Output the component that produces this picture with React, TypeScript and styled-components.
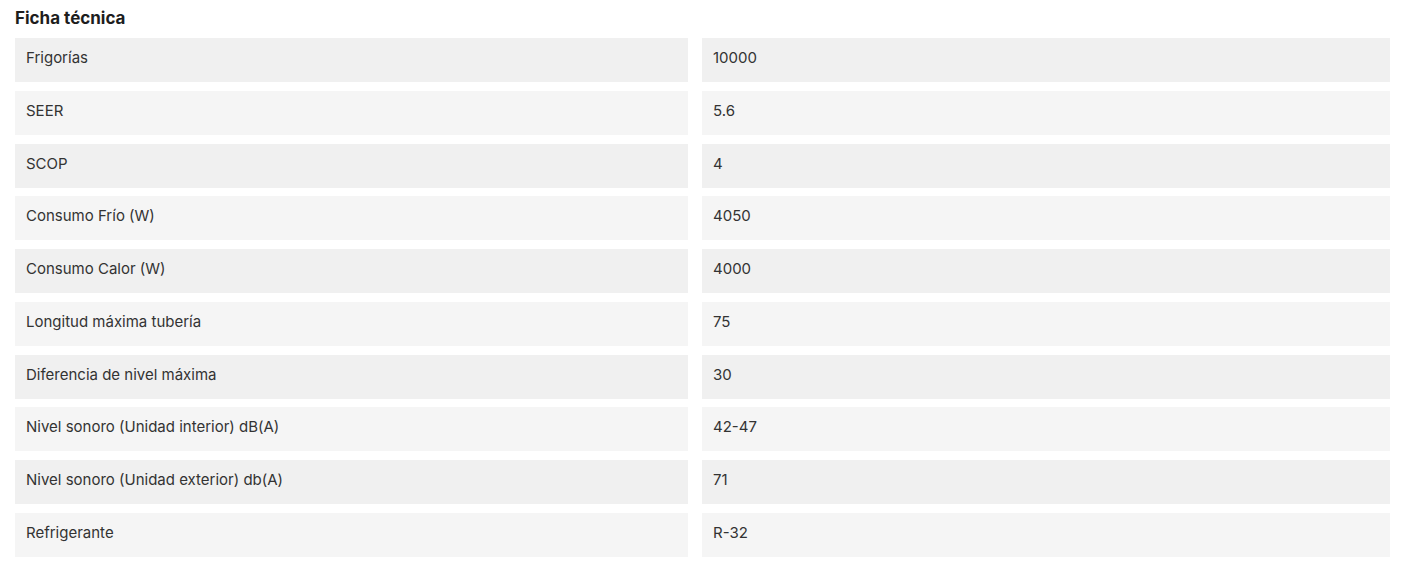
import React from "react";
import styled, { createGlobalStyle } from "styled-components";

const Global = createGlobalStyle`
  html, body { margin: 0; padding: 0; background: #ffffff; }
  body { font-family: Inter, "Open Sans", sans-serif; color: #333333; }
`;

const Section = styled.section`
  padding: 8px 13px 0 15px;
  width: 1375px;
`;

const Title = styled.h2`
  margin: 0 0 10px 0;
  font-size: 17px;
  line-height: 20px;
  font-weight: 700;
  color: #1d1d1d;
`;

const Table = styled.div`
  display: grid;
  grid-template-columns: 673px 688px;
  column-gap: 14px;
  row-gap: 8.78px;
`;

const Cell = styled.div<{ $alt: boolean }>`
  height: 44px;
  display: flex;
  align-items: center;
  padding: 0 11px 5px 11px;
  box-sizing: border-box;
  background: ${(p) => (p.$alt ? "#f5f5f5" : "#f0f0f0")};
  font-size: 15px;
  color: #333333;
`;

const rows: [string, string][] = [
  ["Frigorías", "10000"],
  ["SEER", "5.6"],
  ["SCOP", "4"],
  ["Consumo Frío (W)", "4050"],
  ["Consumo Calor (W)", "4000"],
  ["Longitud máxima tubería", "75"],
  ["Diferencia de nivel máxima", "30"],
  ["Nivel sonoro (Unidad interior) dB(A)", "42-47"],
  ["Nivel sonoro (Unidad exterior) db(A)", "71"],
  ["Refrigerante", "R-32"],
];

export default function App() {
  return (
    <>
      <Global />
      <Section>
        <Title>Ficha técnica</Title>
        <Table>
          {rows.map(([k, v], i) => (
            <React.Fragment key={k}>
              <Cell $alt={i % 2 === 1}>{k}</Cell>
              <Cell $alt={i % 2 === 1}>{v}</Cell>
            </React.Fragment>
          ))}
        </Table>
      </Section>
    </>
  );
}
